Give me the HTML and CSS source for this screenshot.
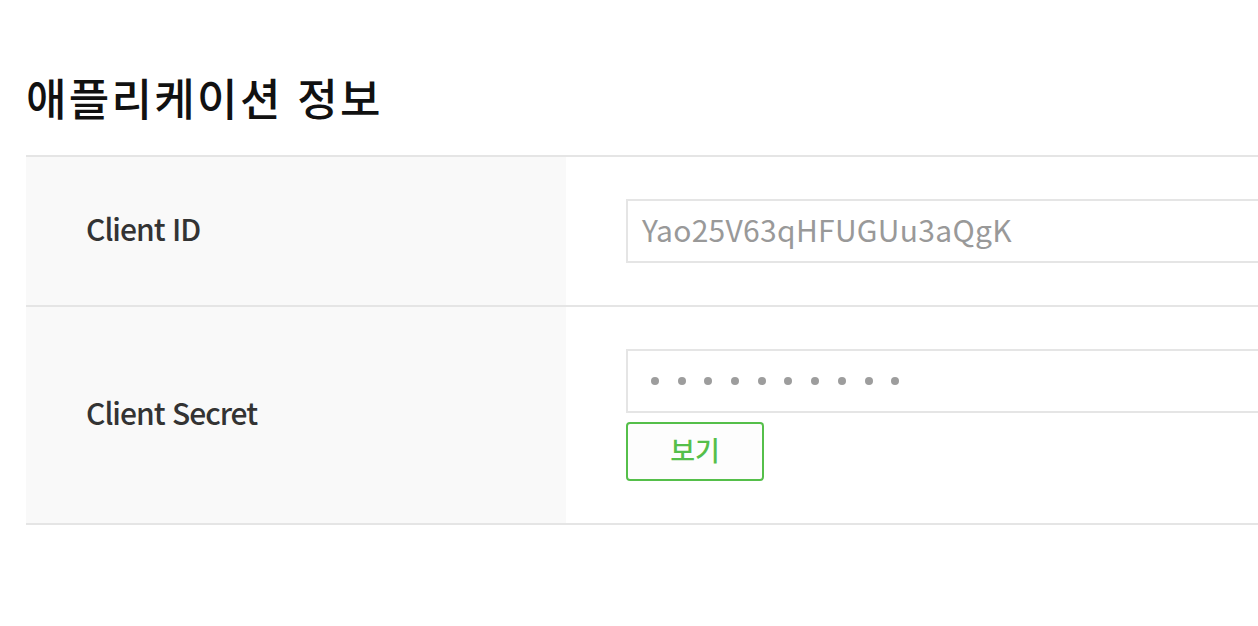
FILE: index.html
```html
<!DOCTYPE html>
<html lang="ko">
<head>
<meta charset="utf-8">
<title>애플리케이션 정보</title>
<link rel="stylesheet" href="styles.css">
</head>
<body>
<div class="page">
  <h2 class="title">애플리케이션 정보</h2>
  <div class="info-table">
    <div class="row row-id">
      <div class="label">Client ID</div>
      <div class="value">
        <div class="field">Yao25V63qHFUGUu3aQgK</div>
      </div>
    </div>
    <div class="row row-secret">
      <div class="label">Client Secret</div>
      <div class="value">
        <div class="field field-secret" aria-label="숨겨진 값">
          <span class="dots"><i></i><i></i><i></i><i></i><i></i><i></i><i></i><i></i><i></i><i></i></span>
        </div>
        <button class="btn-show" type="button">보기</button>
      </div>
    </div>
  </div>
</div>
</body>
</html>
```
FILE: styles.css
```css
html, body {
  margin: 0;
  padding: 0;
  background: #ffffff;
  overflow: hidden;
}

body {
  font-family: "Noto Sans CJK KR", "Noto Sans", sans-serif;
  color: #111111;
}

.page {
  padding: 71px 0 0 26px;
  width: 1500px;
}

.title {
  margin: 0 0 32px 0;
  font-size: 44px;
  line-height: 52px;
  font-weight: 500;
  letter-spacing: 2.3px;
  color: #111111;
}

.info-table {
  border-top: 2px solid #e5e5e5;
  width: 1400px;
}

.row {
  display: flex;
  border-bottom: 2px solid #e5e5e5;
}

.label {
  box-sizing: border-box;
  width: 540px;
  flex: none;
  padding: 0 0 6px 60px;
  background: #f9f9f9;
  display: flex;
  align-items: center;
  font-size: 30px;
  font-weight: 500;
  letter-spacing: -1px;
  color: #333333;
}

.value {
  flex: 1;
  padding: 42px 0 42px 60px;
  display: flex;
  flex-direction: column;
  align-items: flex-start;
}

.field {
  box-sizing: border-box;
  width: 700px;
  height: 64px;
  border: 2px solid #e5e5e5;
  padding: 0 14px 5px 14px;
  display: flex;
  align-items: center;
  font-size: 30px;
  color: #999999;
  letter-spacing: 0.3px;
}

.field-secret {
  padding-bottom: 0;
}

.dots {
  display: flex;
  gap: 18.7px;
  margin-left: 9px;
}

.dots i {
  display: block;
  width: 8px;
  height: 8px;
  border-radius: 50%;
  background: #9d9d9d;
}

.btn-show {
  margin-top: 9px;
  box-sizing: border-box;
  width: 138px;
  height: 59px;
  border: 2px solid #55bf4a;
  border-radius: 4px;
  background: #fdfdfd;
  color: #55bf4a;
  font-family: "Noto Sans CJK KR", "Noto Sans", sans-serif;
  font-size: 27px;
  font-weight: 500;
  padding: 0 0 4px 0;
  cursor: pointer;
}
```
